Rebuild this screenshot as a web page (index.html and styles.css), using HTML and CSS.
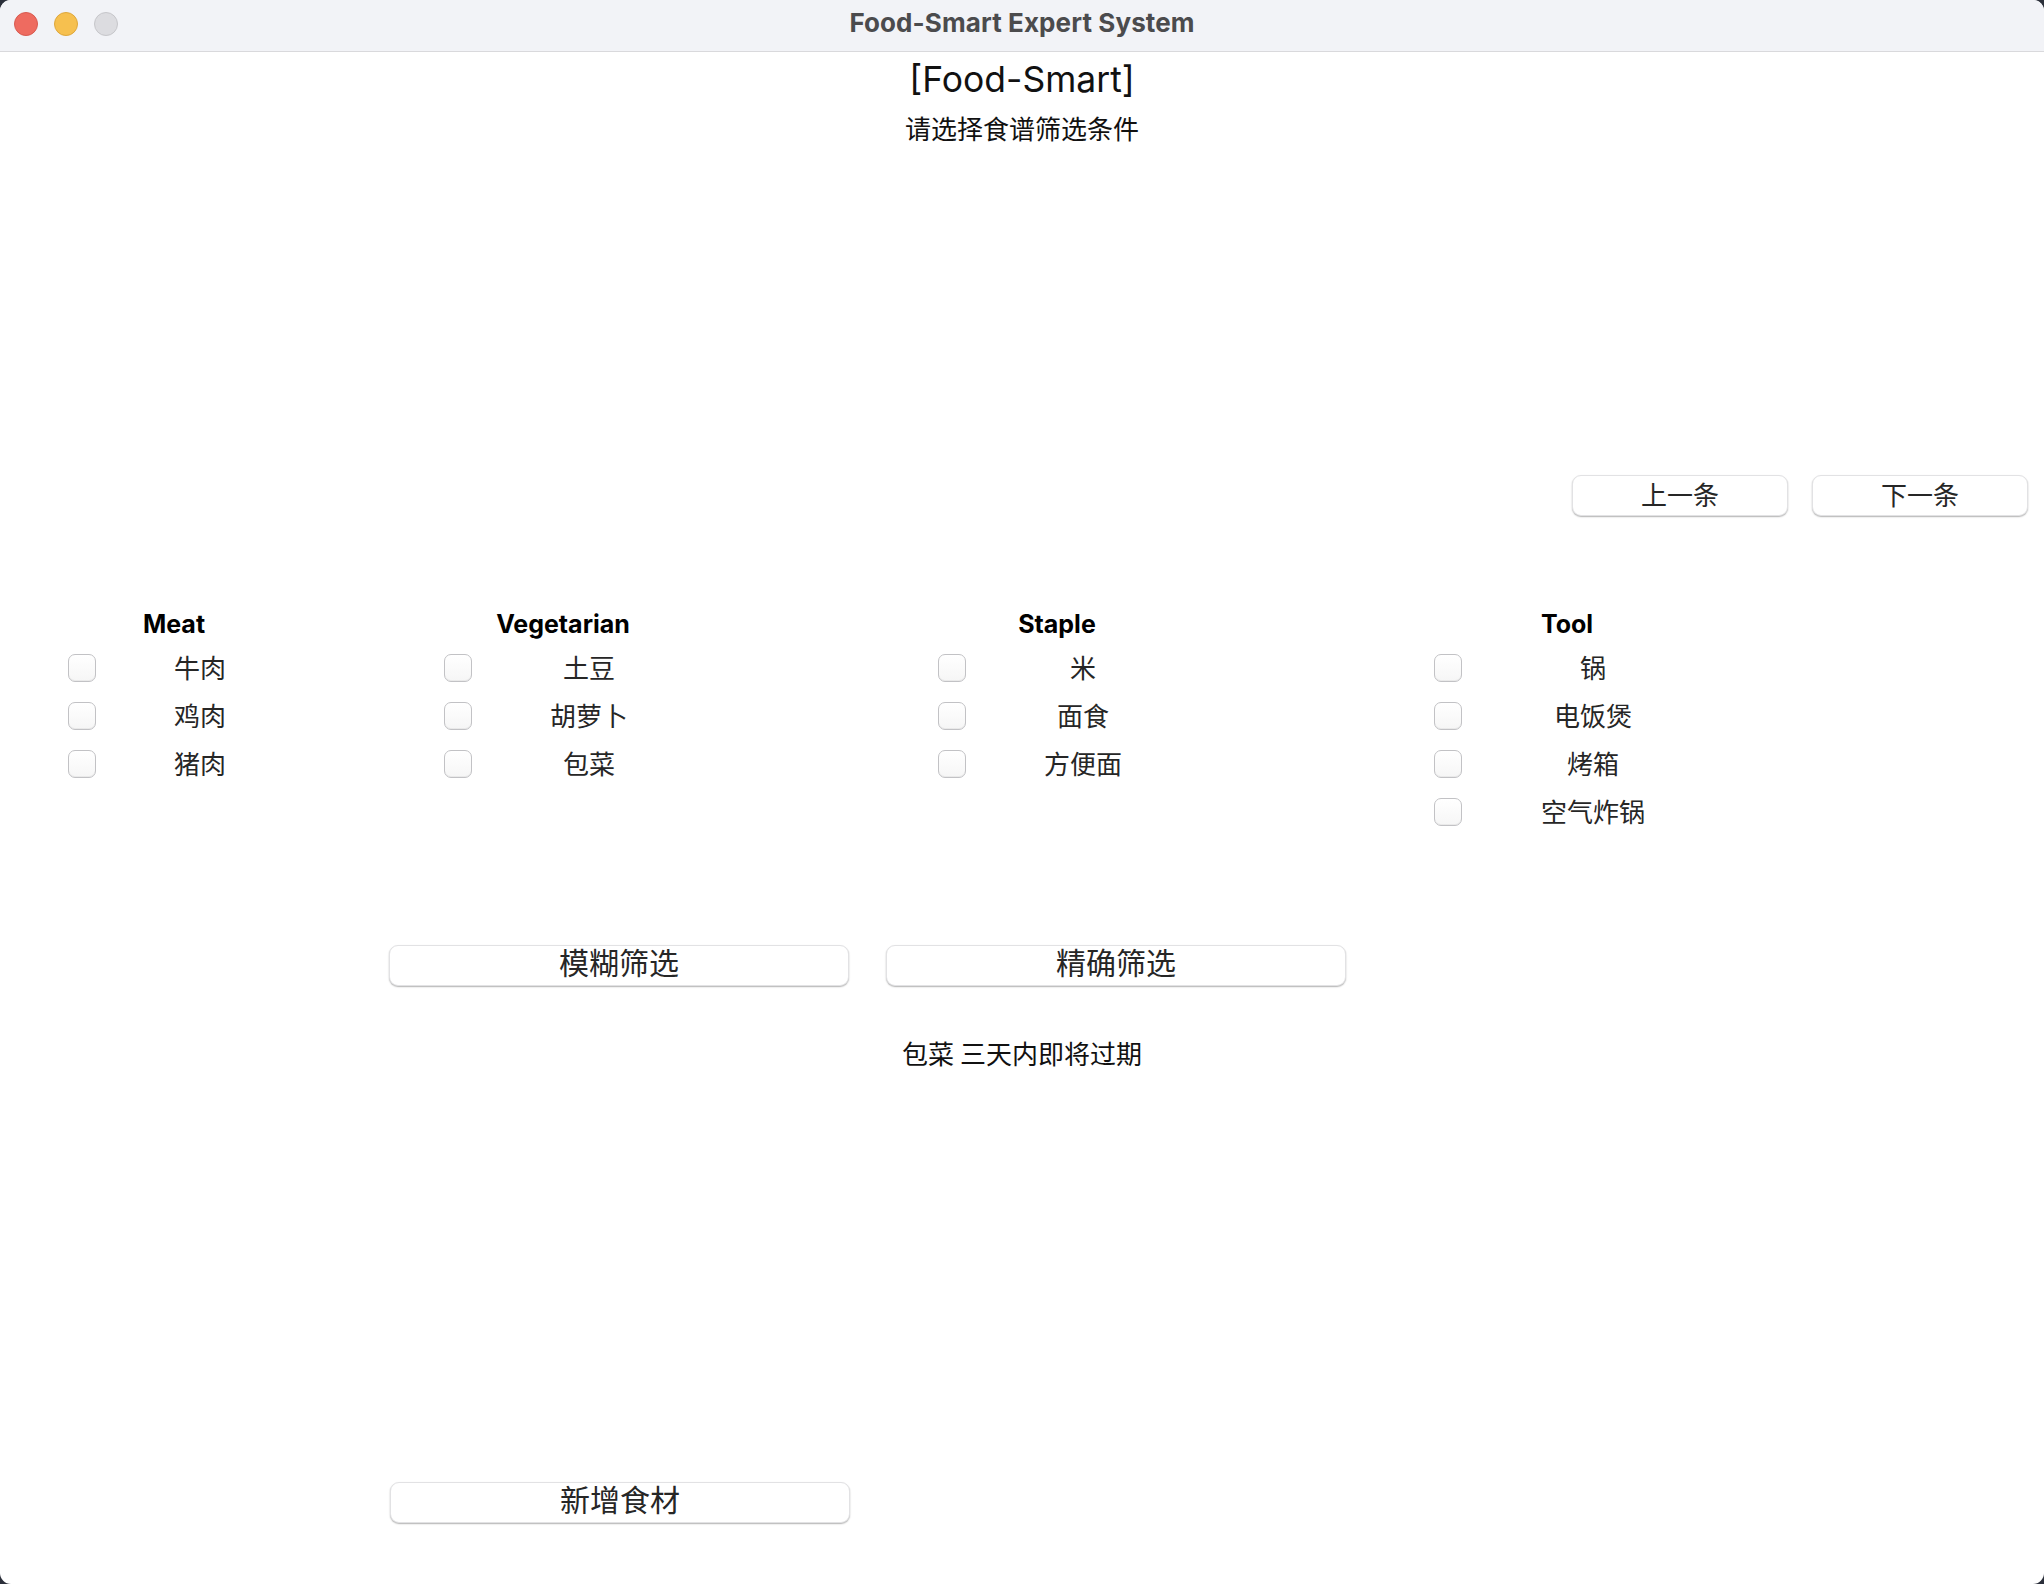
FILE: index.html
```html
<!DOCTYPE html>
<html lang="zh">
<head>
<meta charset="utf-8">
<title>Food-Smart Expert System</title>
<link rel="stylesheet" href="styles.css">
</head>
<body>
<div class="window">
  <header class="titlebar">
    <div class="lights">
      <span class="light red"></span>
      <span class="light yellow"></span>
      <span class="light gray"></span>
    </div>
    <div class="wintitle">Food-Smart Expert System</div>
    <div></div>
  </header>
  <main class="content">
    <h1 class="heading">[Food-Smart]</h1>
    <p class="subtitle">请选择食谱筛选条件</p>

    <div class="nav">
      <button class="btn btn-small">上一条</button>
      <button class="btn btn-small">下一条</button>
    </div>

    <div class="groups">
      <section class="group g-meat">
        <div class="list">
          <div class="ghead">Meat</div>
          <span class="cb"></span><span class="lbl">牛肉</span>
          <span class="cb"></span><span class="lbl">鸡肉</span>
          <span class="cb"></span><span class="lbl">猪肉</span>
        </div>
      </section>
      <section class="group g-veg">
        <div class="list">
          <div class="ghead">Vegetarian</div>
          <span class="cb"></span><span class="lbl">土豆</span>
          <span class="cb"></span><span class="lbl">胡萝卜</span>
          <span class="cb"></span><span class="lbl">包菜</span>
        </div>
      </section>
      <section class="group g-staple">
        <div class="list">
          <div class="ghead">Staple</div>
          <span class="cb"></span><span class="lbl">米</span>
          <span class="cb"></span><span class="lbl">面食</span>
          <span class="cb"></span><span class="lbl">方便面</span>
        </div>
      </section>
      <section class="group g-tool">
        <div class="list">
          <div class="ghead">Tool</div>
          <span class="cb"></span><span class="lbl">锅</span>
          <span class="cb"></span><span class="lbl">电饭煲</span>
          <span class="cb"></span><span class="lbl">烤箱</span>
          <span class="cb"></span><span class="lbl">空气炸锅</span>
        </div>
      </section>
    </div>

    <div class="filters">
      <button class="btn btn-wide">模糊筛选</button>
      <button class="btn btn-wide">精确筛选</button>
    </div>

    <p class="notice">包菜 三天内即将过期</p>

    <div class="addrow">
      <button class="btn btn-wide">新增食材</button>
    </div>
  </main>
</div>
</body>
</html>
```

FILE: styles.css
```css
* { box-sizing: border-box; }

html, body {
  margin: 0;
  padding: 0;
}

body {
  background: #2b2f3a;
  font-family: Inter, "Noto Sans CJK SC", sans-serif;
  color: #111;
}

.window {
  width: 2044px;
  height: 1584px;
  background: #ffffff;
  border-radius: 11px;
  overflow: hidden;
  display: flex;
  flex-direction: column;
}

.titlebar {
  height: 52px;
  flex: none;
  background: #f2f3f7;
  border-bottom: 1px solid #d9d9dc;
  display: grid;
  grid-template-columns: 1fr auto 1fr;
  align-items: center;
}

.lights {
  display: flex;
  gap: 16px;
  padding-left: 14px;
  align-self: start;
  padding-top: 12px;
}

.light {
  width: 24px;
  height: 24px;
  border-radius: 50%;
  display: block;
}
.light.red { background: #ee6b60; border: 1px solid #d85a50; }
.light.yellow { background: #f6c04f; border: 1px solid #dea73c; }
.light.gray { background: #dcdce0; border: 1px solid #c6c6ca; }

.wintitle {
  font-family: Inter, "Noto Sans", sans-serif;
  font-weight: 700;
  font-size: 26px;
  color: #4b4b4d;
  letter-spacing: 0.1px;
  margin-top: -6px;
}

.content {
  display: flex;
  flex-direction: column;
  flex: 1;
}

.heading {
  margin: 6px 0 0;
  text-align: center;
  font-family: Inter, "Noto Sans", sans-serif;
  font-weight: 400;
  font-size: 35.5px;
  line-height: 44px;
  color: #111;
}

.subtitle {
  margin: 8px 0 0;
  text-align: center;
  font-family: "Noto Sans CJK SC", sans-serif;
  font-size: 26px;
  line-height: 36px;
  color: #111;
}

.btn {
  font-family: "Noto Sans CJK SC", sans-serif;
  background: #ffffff;
  border: 1px solid #e2e2e4;
  border-radius: 9px;
  box-shadow: 0 1px 1.5px rgba(0, 0, 0, 0.3);
  color: #262626;
  padding: 0;
  display: flex;
  align-items: center;
  justify-content: center;
}

.btn-small {
  width: 216px;
  height: 41px;
  font-size: 26px;
  padding-bottom: 4px;
}

.btn-wide {
  width: 460px;
  height: 41px;
  font-size: 30px;
  padding-bottom: 9px;
}

.nav {
  margin-top: 329px;
  display: flex;
  justify-content: flex-end;
  gap: 24px;
  padding-right: 16px;
}

.groups {
  margin-top: 93px;
  display: flex;
  align-items: flex-start;
  padding-left: 68px;
}

.group { flex: none; }
.g-meat { width: 376px; }
.g-veg { width: 494px; }
.g-staple { width: 496px; }
.g-tool { width: 400px; }

.list {
  display: grid;
  grid-template-columns: 28px 160px;
  row-gap: 20px;
}
.g-meat .list { column-gap: 24px; }
.g-veg .list { column-gap: 37px; }
.g-staple .list { column-gap: 37px; }
.g-tool .list { column-gap: 51px; }

.ghead {
  grid-column: 2;
  margin-left: -52px;
  text-align: center;
  white-space: nowrap;
  font-family: Inter, "Noto Sans", sans-serif;
  font-weight: 700;
  font-size: 25px;
  line-height: 30px;
  color: #000;
  margin-bottom: -5px;
}

.cb {
  grid-column: 1;
  width: 28px;
  height: 28px;
  border: 1px solid #c2c2c5;
  border-radius: 7px;
  background: linear-gradient(#ffffff, #f6f6f6);
  box-shadow: inset 0 -1px 0 rgba(0, 0, 0, 0.05);
  display: block;
}

.lbl {
  grid-column: 2;
  text-align: center;
  font-family: "Noto Sans CJK SC", sans-serif;
  font-size: 26px;
  line-height: 28px;
  color: #262626;
  margin-top: -1px;
  margin-bottom: 1px;
}

.filters {
  margin-top: 119px;
  display: flex;
  gap: 37px;
  padding-left: 389px;
}

.notice {
  margin: 49px 0 0;
  text-align: center;
  font-family: "Noto Sans CJK SC", sans-serif;
  font-size: 26px;
  line-height: 36px;
  color: #111;
}

.addrow {
  margin-top: 411px;
  display: flex;
  padding-left: 390px;
}
```
